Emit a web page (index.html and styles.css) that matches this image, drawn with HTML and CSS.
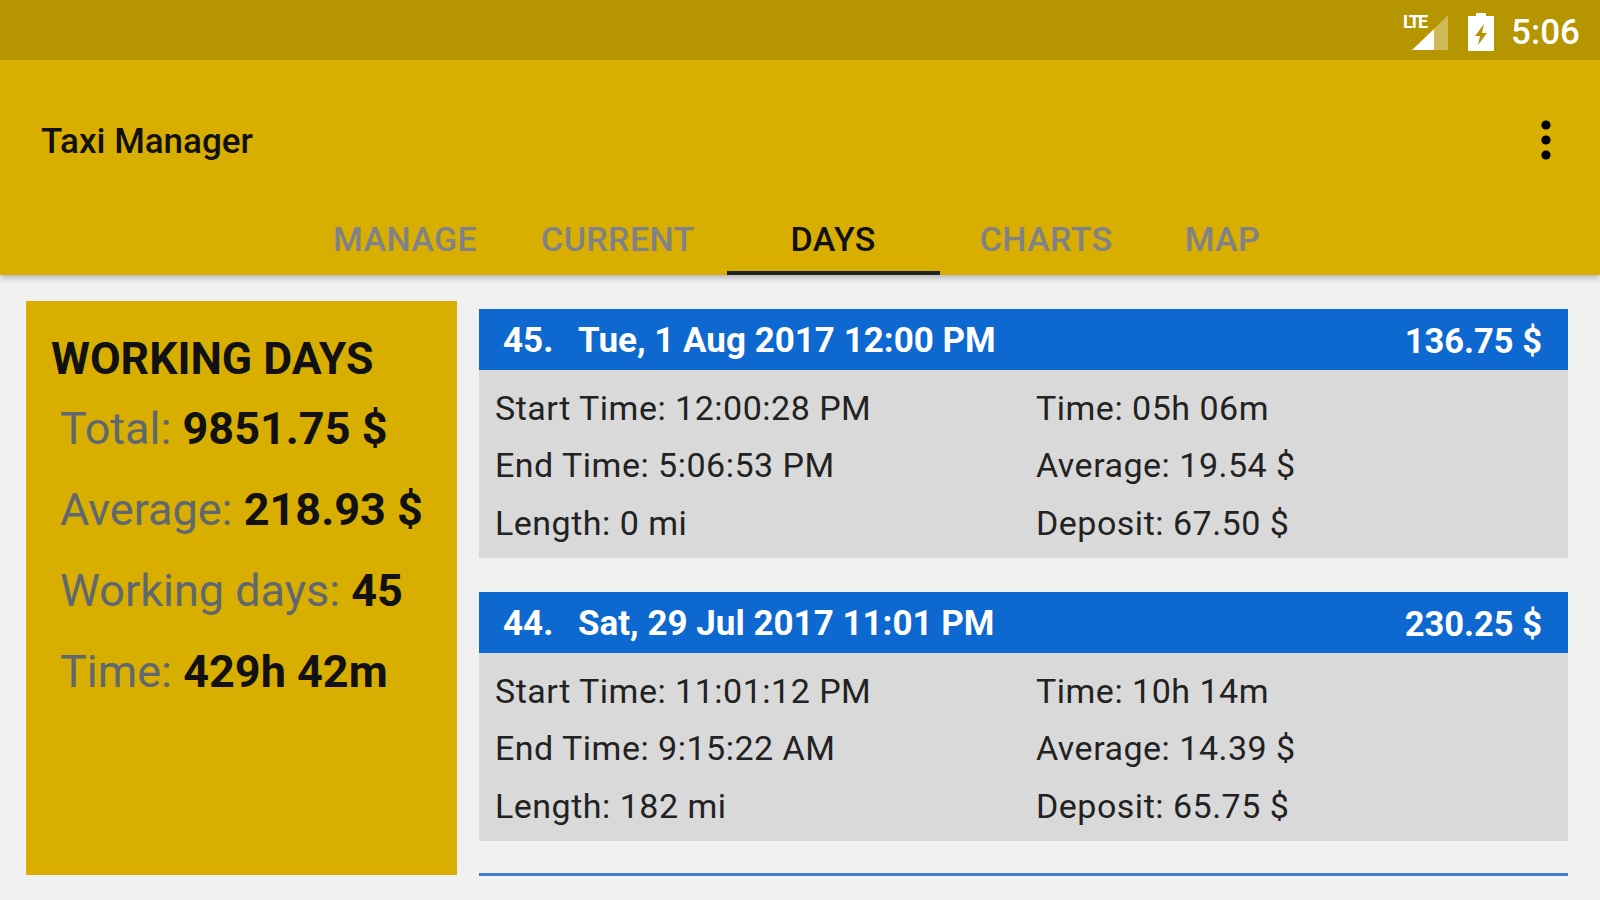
FILE: index.html
```html
<!DOCTYPE html>
<html lang="en">
<head>
    <meta charset="UTF-8">
    <title>Taxi Manager</title>
    <link rel="stylesheet" href="styles.css">
</head>
<body>

    <header class="app-header">
        <!-- Android status bar -->
        <div class="status-bar">
            <span class="signal">
                <span class="lte">LTE</span>
                <svg class="signal-icon" width="36" height="35" viewBox="0 0 36 35">
                    <polygon points="36,0 36,35 22,35 22,14" fill="#ffffff" opacity="0.35"/>
                    <polygon points="22,14 22,35 0,35" fill="#ffffff"/>
                </svg>
            </span>
            <svg class="battery-icon" width="26" height="38" viewBox="0 0 26 38">
                <path d="M8 0h10v3h8v35H0V3h8z" fill="#ffffff"/>
                <path d="M16 11L7 23h5l-2 9 9-12h-5l2-9z" fill="#b59500"/>
            </svg>
            <span class="clock">5:06</span>
        </div>

        <div class="toolbar">
            <h1 class="app-title">Taxi Manager</h1>
            <svg class="menu-icon" width="12" height="42" viewBox="0 0 12 42">
                <circle cx="6" cy="6" r="4.6"/>
                <circle cx="6" cy="21" r="4.6"/>
                <circle cx="6" cy="36" r="4.6"/>
            </svg>
        </div>

        <nav class="tabs">
            <a class="tab">MANAGE</a>
            <a class="tab">CURRENT</a>
            <a class="tab tab-wide active">DAYS</a>
            <a class="tab tab-wide">CHARTS</a>
            <a class="tab">MAP</a>
        </nav>
    </header>

    <main class="content">
        <aside class="summary">
            <h2>WORKING DAYS</h2>
            <p>Total: <b>9851.75 $</b></p>
            <p>Average: <b>218.93 $</b></p>
            <p>Working days: <b>45</b></p>
            <p>Time: <b>429h 42m</b></p>
        </aside>

        <section class="day-list">
            <article class="day-card">
                <div class="day-head">
                    <span class="day-num">45.</span>
                    <span class="day-date">Tue, 1 Aug 2017 12:00 PM</span>
                    <span class="day-total">136.75 $</span>
                </div>
                <div class="day-body">
                    <span>Start Time: 12:00:28 PM</span>
                    <span>Time: 05h 06m</span>
                    <span>End Time: 5:06:53 PM</span>
                    <span>Average: 19.54 $</span>
                    <span>Length: 0 mi</span>
                    <span>Deposit: 67.50 $</span>
                </div>
            </article>

            <article class="day-card">
                <div class="day-head">
                    <span class="day-num">44.</span>
                    <span class="day-date">Sat, 29 Jul 2017 11:01 PM</span>
                    <span class="day-total">230.25 $</span>
                </div>
                <div class="day-body">
                    <span>Start Time: 11:01:12 PM</span>
                    <span>Time: 10h 14m</span>
                    <span>End Time: 9:15:22 AM</span>
                    <span>Average: 14.39 $</span>
                    <span>Length: 182 mi</span>
                    <span>Deposit: 65.75 $</span>
                </div>
            </article>

            <div class="day-next"></div>
        </section>
    </main>

</body>
</html>
```

FILE: styles.css
```css
:root {
    --status-color: #b59500;
    --primary-color: #d8ae00;
    --blue-color: #0d68cf;
    --bg-color: #f1f1f1;
    --card-color: #d9d9d9;
    --muted-color: #5f6770;
}

html, body {
    margin: 0;
    padding: 0;
    height: 100%;
    font-family: Roboto, "Liberation Sans", sans-serif;
    background-color: var(--bg-color);
    color: #111;
    overflow: hidden;
}

/* Header */
.app-header {
    background-color: var(--primary-color);
    height: 275px;
    box-shadow: 0 3px 6px rgba(0, 0, 0, 0.25);
    position: relative;
}

.status-bar {
    background-color: var(--status-color);
    height: 60px;
    box-sizing: border-box;
    display: flex;
    align-items: center;
    justify-content: flex-end;
    padding: 4px 20px 0 0;
    color: #fff;
}

.signal {
    position: relative;
    width: 47px;
    height: 36px;
    display: flex;
    justify-content: flex-end;
    align-items: flex-end;
    margin-right: 20px;
}

.lte {
    position: absolute;
    left: 2px;
    top: -1px;
    font-size: 18px;
    font-weight: 700;
    letter-spacing: -2px;
    line-height: 18px;
}

.battery-icon {
    margin-right: 17px;
}

.clock {
    font-size: 35px;
    font-weight: 500;
}

.toolbar {
    height: 160px;
    display: flex;
    align-items: center;
    justify-content: space-between;
    padding: 0 48px 0 41px;
    box-sizing: border-box;
}

.app-title {
    font-size: 35px;
    font-weight: 500;
    margin: 2px 0 0;
    color: #111;
}

.tabs {
    display: flex;
    position: absolute;
    left: 301px;
    bottom: 0;
}

.tab {
    height: 55px;
    padding: 0 32px 14px;
    box-sizing: border-box;
    display: flex;
    align-items: center;
    justify-content: center;
    font-size: 34px;
    letter-spacing: 0.4px;
    font-weight: 500;
    color: #7f8288;
    border-bottom: 4px solid transparent;
}

.tab-wide {
    min-width: 213px;
}

.tab.active {
    color: #111;
    border-bottom-color: #222;
}

/* Content */
.content {
    display: flex;
    padding: 26px 32px 0 26px;
    gap: 22px;
}

.summary {
    background-color: var(--primary-color);
    width: 431px;
    height: 574px;
    flex: none;
    box-sizing: border-box;
    padding: 33px 0 0 25px;
}

.summary h2 {
    font-size: 44.5px;
    font-weight: 700;
    line-height: 50px;
    margin: 0 0 20px;
    color: #111;
}

.summary p {
    font-size: 45px;
    line-height: 50px;
    margin: 0 0 31px 9px;
    color: var(--muted-color);
}

.summary b {
    color: #111;
    font-weight: 700;
}

.day-list {
    flex: 1;
    padding-top: 8px;
}

.day-card {
    margin-bottom: 34px;
}

.day-head {
    background-color: var(--blue-color);
    color: #fff;
    height: 61px;
    box-sizing: border-box;
    display: flex;
    align-items: center;
    padding: 2px 26px 0 24px;
    font-size: 35px;
    font-weight: 700;
}

.day-num {
    width: 75px;
}

.day-total {
    margin-left: auto;
    font-size: 34.5px;
}

.day-body {
    background-color: var(--card-color);
    height: 188px;
    box-sizing: border-box;
    padding: 9px 0 0 16px;
    display: grid;
    grid-template-columns: 541px 1fr;
    grid-auto-rows: 57.5px;
    align-items: center;
    font-size: 34px;
    letter-spacing: 0.5px;
    color: #222;
}

.day-next {
    height: 3px;
    margin-top: -2px;
    background-color: #3f7fd6;
}
```
